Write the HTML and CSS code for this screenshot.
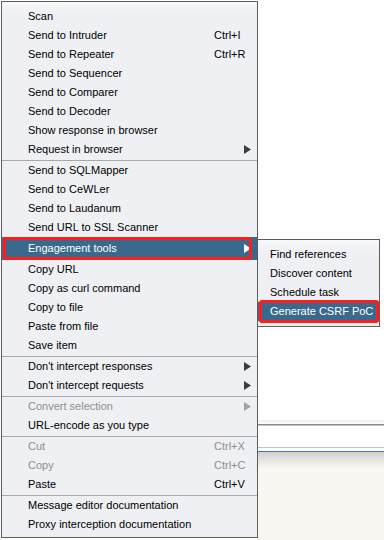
FILE: index.html
```html
<!DOCTYPE html>
<html>
<head>
<meta charset="utf-8">
<link rel="stylesheet" href="styles.css">
</head>
<body>
<div class="screen">
  <div class="menu main">
    <div class="item"><span class="label">Scan</span></div>
    <div class="item"><span class="label">Send to Intruder</span><span class="key">Ctrl+I</span></div>
    <div class="item"><span class="label">Send to Repeater</span><span class="key">Ctrl+R</span></div>
    <div class="item"><span class="label">Send to Sequencer</span></div>
    <div class="item"><span class="label">Send to Comparer</span></div>
    <div class="item"><span class="label">Send to Decoder</span></div>
    <div class="item"><span class="label">Show response in browser</span></div>
    <div class="item"><span class="label">Request in browser</span><svg class="arrow" width="7" height="9" viewBox="0 0 7 9"><polygon points="0,0 7,4.5 0,9"/></svg></div>
    <div class="sep"></div>
    <div class="item"><span class="label">Send to SQLMapper</span></div>
    <div class="item"><span class="label">Send to CeWLer</span></div>
    <div class="item"><span class="label">Send to Laudanum</span></div>
    <div class="item"><span class="label">Send URL to SSL Scanner</span></div>
    <div class="item active tall"><span class="label">Engagement tools</span><svg class="arrow" width="7" height="9" viewBox="0 0 7 9"><polygon points="0,0 7,4.5 0,9"/></svg></div>
    <div class="item"><span class="label">Copy URL</span></div>
    <div class="item"><span class="label">Copy as curl command</span></div>
    <div class="item"><span class="label">Copy to file</span></div>
    <div class="item"><span class="label">Paste from file</span></div>
    <div class="item"><span class="label">Save item</span></div>
    <div class="sep"></div>
    <div class="item"><span class="label">Don't intercept responses</span><svg class="arrow" width="7" height="9" viewBox="0 0 7 9"><polygon points="0,0 7,4.5 0,9"/></svg></div>
    <div class="item"><span class="label">Don't intercept requests</span><svg class="arrow" width="7" height="9" viewBox="0 0 7 9"><polygon points="0,0 7,4.5 0,9"/></svg></div>
    <div class="sep"></div>
    <div class="item disabled"><span class="label">Convert selection</span><svg class="arrow" width="7" height="9" viewBox="0 0 7 9"><polygon points="0,0 7,4.5 0,9"/></svg></div>
    <div class="item"><span class="label">URL-encode as you type</span></div>
    <div class="sep"></div>
    <div class="item disabled"><span class="label">Cut</span><span class="key">Ctrl+X</span></div>
    <div class="item disabled"><span class="label">Copy</span><span class="key">Ctrl+C</span></div>
    <div class="item"><span class="label">Paste</span><span class="key">Ctrl+V</span></div>
    <div class="sep"></div>
    <div class="item"><span class="label">Message editor documentation</span></div>
    <div class="item"><span class="label">Proxy interception documentation</span></div>
  </div>
  <div class="backdrop">
    <div class="bk-white"></div>
    <div class="bk-faint"></div>
    <div class="bk-gap"></div>
    <div class="bk-dark"></div>
    <div class="bk-dark2"></div>
    <div class="bk-field"></div>
    <div class="bk-gray"></div>
    <div class="bk-gap3"></div>
    <div class="bk-blue"></div>
    <div class="bk-panel"></div>
  </div>
  <div class="menu sub">
    <div class="item"><span class="label">Find references</span></div>
    <div class="item"><span class="label">Discover content</span></div>
    <div class="item"><span class="label">Schedule task</span></div>
    <div class="item active"><span class="label">Generate CSRF PoC</span></div>
  </div>
</div>
</body>
</html>
```

FILE: styles.css
```css
* { box-sizing: border-box; }
html, body { margin: 0; padding: 0; background: #ffffff; }
.screen {
  position: relative;
  width: 384px;
  height: 540px;
  display: flex;
  align-items: flex-start;
  overflow: hidden;
  font-family: "Liberation Sans", Arial, sans-serif;
  font-size: 11px;
  color: #000;
}
.menu {
  background: linear-gradient(#f7f8fa, #eef0f4 12px);
  border: 1px solid #5c5c5c;
  display: flex;
  flex-direction: column;
}
.main {
  margin: 1px 0 0 1px;
  width: 257px;
  height: 537px;
  padding: 5px 0 0 0;
  flex: none;
}
.item {
  position: relative;
  height: 19px;
  line-height: 19px;
  display: flex;
  align-items: center;
  padding: 0 6px 0 26px;
  white-space: nowrap;
}
.item .label { flex: 1; }
.item .key { width: 37px; }
.arrow { fill: #3d3d3d; flex: none; }
.disabled { color: #8f8f8f; }
.disabled .arrow { fill: #a3a3a3; }
.sep {
  height: 2px;
  padding-top: 1px;
  border-bottom: 1px solid #a8a8a8;
  flex: none;
}
.tall { height: 23px; }
.active {
  background: #396a8d;
  color: #ffffff;
}
.active .arrow { fill: #ffffff; }
.active::after {
  content: "";
  position: absolute;
  left: 1px;
  right: 5px;
  top: 0;
  bottom: 0;
  border: 3px solid #ff1e1e;
  border-radius: 3px;
}
.backdrop {
  flex: 1;
  align-self: stretch;
  display: flex;
  flex-direction: column;
}
.bk-white { height: 420px; background: #ffffff; }
.bk-faint { height: 2px; background: #f1f1f1; }
.bk-gap { height: 2px; background: #fbfbfb; }
.bk-dark { height: 1px; background: #8a8a8a; }
.bk-dark2 { height: 1px; background: #c2c2c2; }
.bk-field { height: 21px; background: #ffffff; }
.bk-gray { height: 1px; background: #c4c4c4; }
.bk-gap3 { height: 3px; background: #ffffff; }
.bk-blue { height: 1px; background: #3b79c2; }
.bk-panel { flex: 1; background: linear-gradient(#d3d1cc, #f8f7f2 16px, #f8f7f2); }
.sub {
  position: absolute;
  left: 257px;
  top: 239px;
  width: 123px;
  height: 88px;
  padding: 5px 0 0 0;
}
.sub .item { padding: 0 6px 0 12px; }
.sub .active::after {
  left: 1px;
  right: 0;
  top: -2px;
  bottom: -2px;
}
```
